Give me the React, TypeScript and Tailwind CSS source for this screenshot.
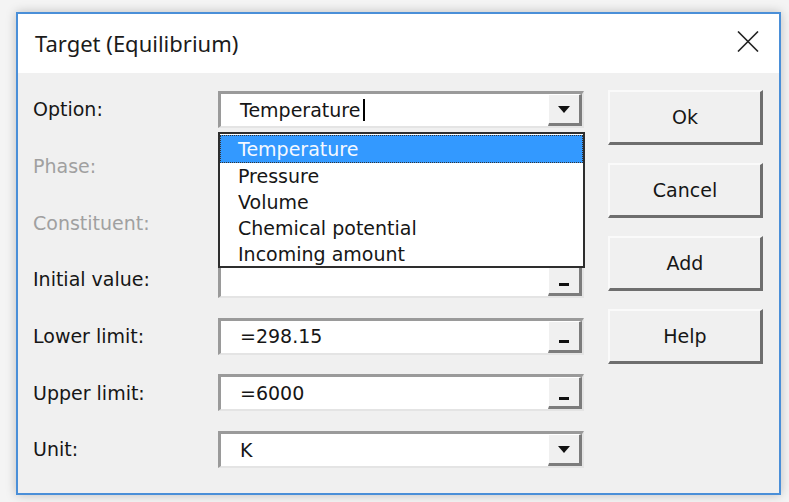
import React from "react";

type Row = {
  label: string;
  value?: string;
  kind: "combo" | "ellipsis";
  disabled?: boolean;
  caret?: boolean;
};

const rows: Row[] = [
  { label: "Option:", value: "Temperature", kind: "combo", caret: true },
  { label: "Phase:", kind: "combo", disabled: true },
  { label: "Constituent:", kind: "combo", disabled: true },
  { label: "Initial value:", kind: "ellipsis" },
  { label: "Lower limit:", value: "=298.15", kind: "ellipsis" },
  { label: "Upper limit:", value: "=6000", kind: "ellipsis" },
  { label: "Unit:", value: "K", kind: "combo" },
];

const options = ["Temperature", "Pressure", "Volume", "Chemical potential", "Incoming amount"];

const font = { fontFamily: '"DejaVu Sans", Verdana, sans-serif' };

function SideButton({ kind }: { kind: Row["kind"] }) {
  return (
    <div className="flex h-full w-[34px] shrink-0 items-center justify-center border-t border-l border-r-[3px] border-b-[3px] border-t-white border-l-white border-r-[#7c7c7c] border-b-[#7c7c7c] bg-[#f0f0f0]">
      {kind === "combo" ? (
        <svg width="12" height="7" viewBox="0 0 12 7" className="mt-[1px]">
          <path d="M0 0h12L6 7z" fill="#111" />
        </svg>
      ) : (
        <div className="mt-[12px] h-[3px] w-[10px] bg-[#111]" />
      )}
    </div>
  );
}

function Field({ row }: { row: Row }) {
  return (
    <div className="flex h-[37px] w-[366px] border-t-[3px] border-l-[3px] border-r-2 border-b-2 border-t-[#9a9a9a] border-l-[#9a9a9a] border-r-[#e4e4e4] border-b-[#e4e4e4] bg-white">
      <div className="flex min-w-0 flex-1 items-center pl-[19px] text-[19px] text-[#161616]">
        <span>{row.value}</span>
        {row.caret && <span className="ml-[3px] inline-block h-[22px] w-[2px] bg-black" />}
      </div>
      <SideButton kind={row.kind} />
    </div>
  );
}

export default function App() {
  return (
    <div className="h-[502px] w-[789px] overflow-hidden bg-[#f4f4f4] pl-[16px] pt-[12px]" style={font}>
      <div className="flex h-[483px] w-[765px] flex-col border-2 border-[#4a8fd8] bg-[#f0f0f0] shadow-[0_0_10px_rgba(0,0,0,0.22)]">
        <div className="flex h-[59px] shrink-0 items-center justify-between bg-white pl-[17px] pr-[20px]">
          <span className="text-[22px] text-[#1b1b1b]" style={{ fontFamily: '"Noto Sans", "Open Sans", sans-serif' }}>
            Target (Equilibrium)
          </span>
          <svg width="22" height="21" viewBox="0 0 22 21" className="-mt-[4px]">
            <path d="M1 0.5L21 20.5M21 0.5L1 20.5" stroke="#222" strokeWidth="1.6" />
          </svg>
        </div>

        <div className="relative flex flex-1 pl-[15px] pt-[18px]">
          <div className="flex flex-col gap-[19.67px]">
            {rows.map((row) => (
              <div key={row.label} className="flex items-center">
                <span className={`w-[185px] text-[19px] ${row.disabled ? "text-[#a0a0a0]" : "text-[#161616]"}`}>{row.label}</span>
                <Field row={row} />
              </div>
            ))}
          </div>

          <div className="-mt-[1px] ml-[24px] flex flex-col gap-[18px]">
            {["Ok", "Cancel", "Add", "Help"].map((b) => (
              <button
                key={b}
                type="button"
                className="flex h-[55px] w-[155px] items-center justify-center border-t-2 border-l-2 border-r-[3px] border-b-[3px] border-t-[#fafafa] border-l-[#fafafa] border-r-[#6e6e6e] border-b-[#6e6e6e] bg-[#f0f0f0] text-[19px] text-[#161616]"
              >
                {b}
              </button>
            ))}
          </div>

          <div className="absolute left-[200px] top-[59px] flex h-[136px] w-[367px] flex-col border-2 border-[#2e2e2e] bg-white pt-[1px] text-[19px] leading-[26px] text-[#161616]">
            {options.map((o, i) => (
              <div
                key={o}
                className={
                  i === 0
                    ? "border border-dotted border-[#333] bg-[#3399ff] pl-[17px] text-[#f4f8ff]"
                    : "pl-[18px]"
                }
              >
                {o}
              </div>
            ))}
          </div>
        </div>
      </div>
    </div>
  );
}
